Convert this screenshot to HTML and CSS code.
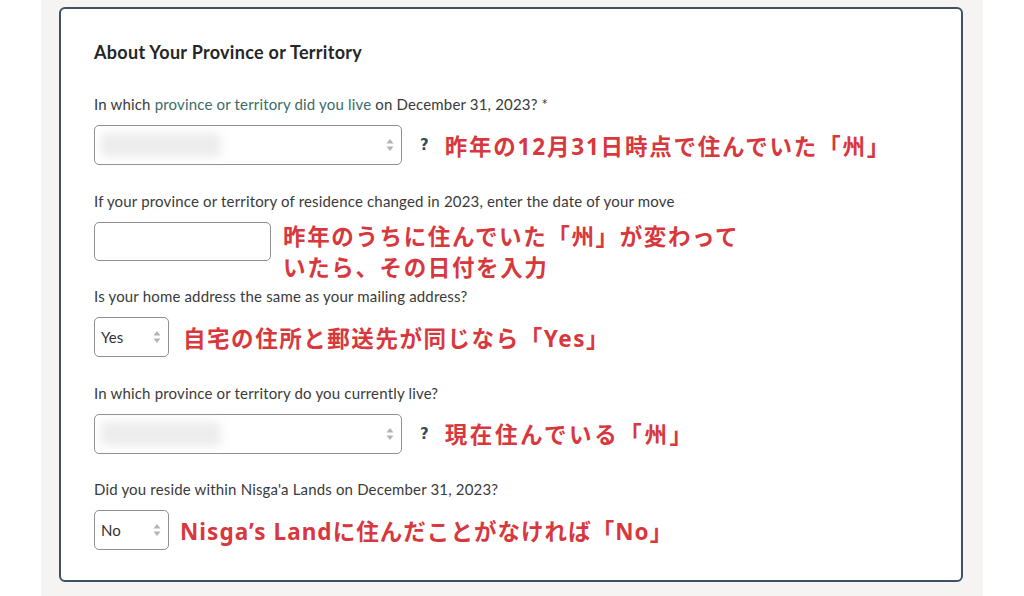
FILE: index.html
```html
<!DOCTYPE html>
<html lang="en">
<head>
<meta charset="utf-8">
<title>About Your Province or Territory</title>
<link rel="stylesheet" href="styles.css">
</head>
<body>
<div class="page">
  <section class="card">
    <h2 class="title">About Your Province or Territory</h2>

    <div class="group">
      <div class="label">In which <span class="link">province or territory did you live</span> on December 31, 2023? *</div>
      <div class="row">
        <div class="field select wide">
          <div class="blur"></div>
          <svg class="arrows" width="8" height="14" viewBox="0 0 8 14"><path d="M4 1 L7.5 5.5 H0.5 Z M4 13 L7.5 8.5 H0.5 Z" fill="#b3b3b3"/></svg>
        </div>
        <span class="help">?</span>
        <span class="note">昨年の12月31日時点で住んでいた「州」</span>
      </div>
    </div>

    <div class="group">
      <div class="label">If your province or territory of residence changed in 2023, enter the date of your move</div>
      <div class="row top">
        <div class="field date"></div>
        <span class="note two">昨年のうちに住んでいた「州」が変わって<br>いたら、その日付を入力</span>
      </div>
    </div>

    <div class="group">
      <div class="label">Is your home address the same as your mailing address?</div>
      <div class="row">
        <div class="field select small">
          <span class="value">Yes</span>
          <svg class="arrows" width="8" height="14" viewBox="0 0 8 14"><path d="M4 1 L7.5 5.5 H0.5 Z M4 13 L7.5 8.5 H0.5 Z" fill="#b3b3b3"/></svg>
        </div>
        <span class="note n3">自宅の住所と郵送先が同じなら「Yes」</span>
      </div>
    </div>

    <div class="group">
      <div class="label">In which province or territory do you currently live?</div>
      <div class="row">
        <div class="field select wide">
          <div class="blur"></div>
          <svg class="arrows" width="8" height="14" viewBox="0 0 8 14"><path d="M4 1 L7.5 5.5 H0.5 Z M4 13 L7.5 8.5 H0.5 Z" fill="#b3b3b3"/></svg>
        </div>
        <span class="help">?</span>
        <span class="note n4">現在住んでいる「州」</span>
      </div>
    </div>

    <div class="group">
      <div class="label">Did you reside within Nisga'a Lands on December 31, 2023?</div>
      <div class="row">
        <div class="field select small">
          <span class="value">No</span>
          <svg class="arrows" width="8" height="14" viewBox="0 0 8 14"><path d="M4 1 L7.5 5.5 H0.5 Z M4 13 L7.5 8.5 H0.5 Z" fill="#b3b3b3"/></svg>
        </div>
        <span class="note n5">Nisga’s Landに住んだことがなければ「No」</span>
      </div>
    </div>
  </section>
</div>
</body>
</html>
```

FILE: styles.css
```css
html, body {
  margin: 0;
  padding: 0;
  background: #ffffff;
}

body {
  width: 1024px;
  height: 596px;
  overflow: hidden;
  font-family: Lato, "Noto Sans", "Noto Sans CJK JP", sans-serif;
  color: #333333;
}

.page {
  margin-left: 41px;
  width: 942px;
  height: 596px;
  box-sizing: border-box;
  padding: 7px 20px 14px 18px;
  background: #f5f4f2;
}

.card {
  box-sizing: border-box;
  height: 575px;
  background: #ffffff;
  border: 2px solid #3f5263;
  border-radius: 6px;
  padding: 31px 33px 0 33px;
}

.title {
  margin: 0 0 30px 0;
  font-size: 18px;
  line-height: 24px;
  letter-spacing: 0.3px;
  font-weight: 700;
  color: #262626;
}

.group {
  margin-bottom: 25.5px;
}

.label {
  font-size: 15px;
  line-height: 20px;
  letter-spacing: 0.17px;
  margin-bottom: 11px;
  color: #3a3a3a;
}

.link {
  color: #3b6b6a;
}

.row {
  display: flex;
  align-items: center;
  height: 40px;
}

.row.top {
  align-items: flex-start;
  height: 39px;
}

.field {
  box-sizing: border-box;
  height: 40px;
  border: 1.5px solid #8f8f8f;
  border-radius: 5px;
  background: #ffffff;
  flex: none;
}

.select {
  display: flex;
  align-items: center;
  padding: 0 7px 0 6px;
}

.wide {
  width: 308px;
}

.small {
  width: 75px;
}

.date {
  width: 177px;
  height: 39px;
}

.blur {
  width: 120px;
  height: 24px;
  background: #ececec;
  filter: blur(5px);
  border-radius: 4px;
}

.value {
  font-size: 15px;
  color: #333333;
}

.arrows {
  margin-left: auto;
  display: block;
}

.help {
  margin-left: 18px;
  margin-right: 16px;
  font-family: "DejaVu Sans", sans-serif;
  font-size: 15px;
  font-weight: 700;
  color: #2f4f60;
}

.note {
  font-family: "Noto Sans", "Noto Sans CJK JP", sans-serif;
  font-size: 22.5px;
  font-weight: 700;
  letter-spacing: 1.8px;
  color: #d8383d;
  white-space: nowrap;
}

.note.two {
  margin-left: 12px;
  line-height: 31px;
  margin-top: -1px;
  letter-spacing: 1.63px;
}

.note.n3 {
  margin-left: 14px;
  letter-spacing: 1.55px;
}

.note.n4 {
  letter-spacing: 2.6px;
}

.note.n5 {
  margin-left: 11px;
  letter-spacing: 1.05px;
}
```
